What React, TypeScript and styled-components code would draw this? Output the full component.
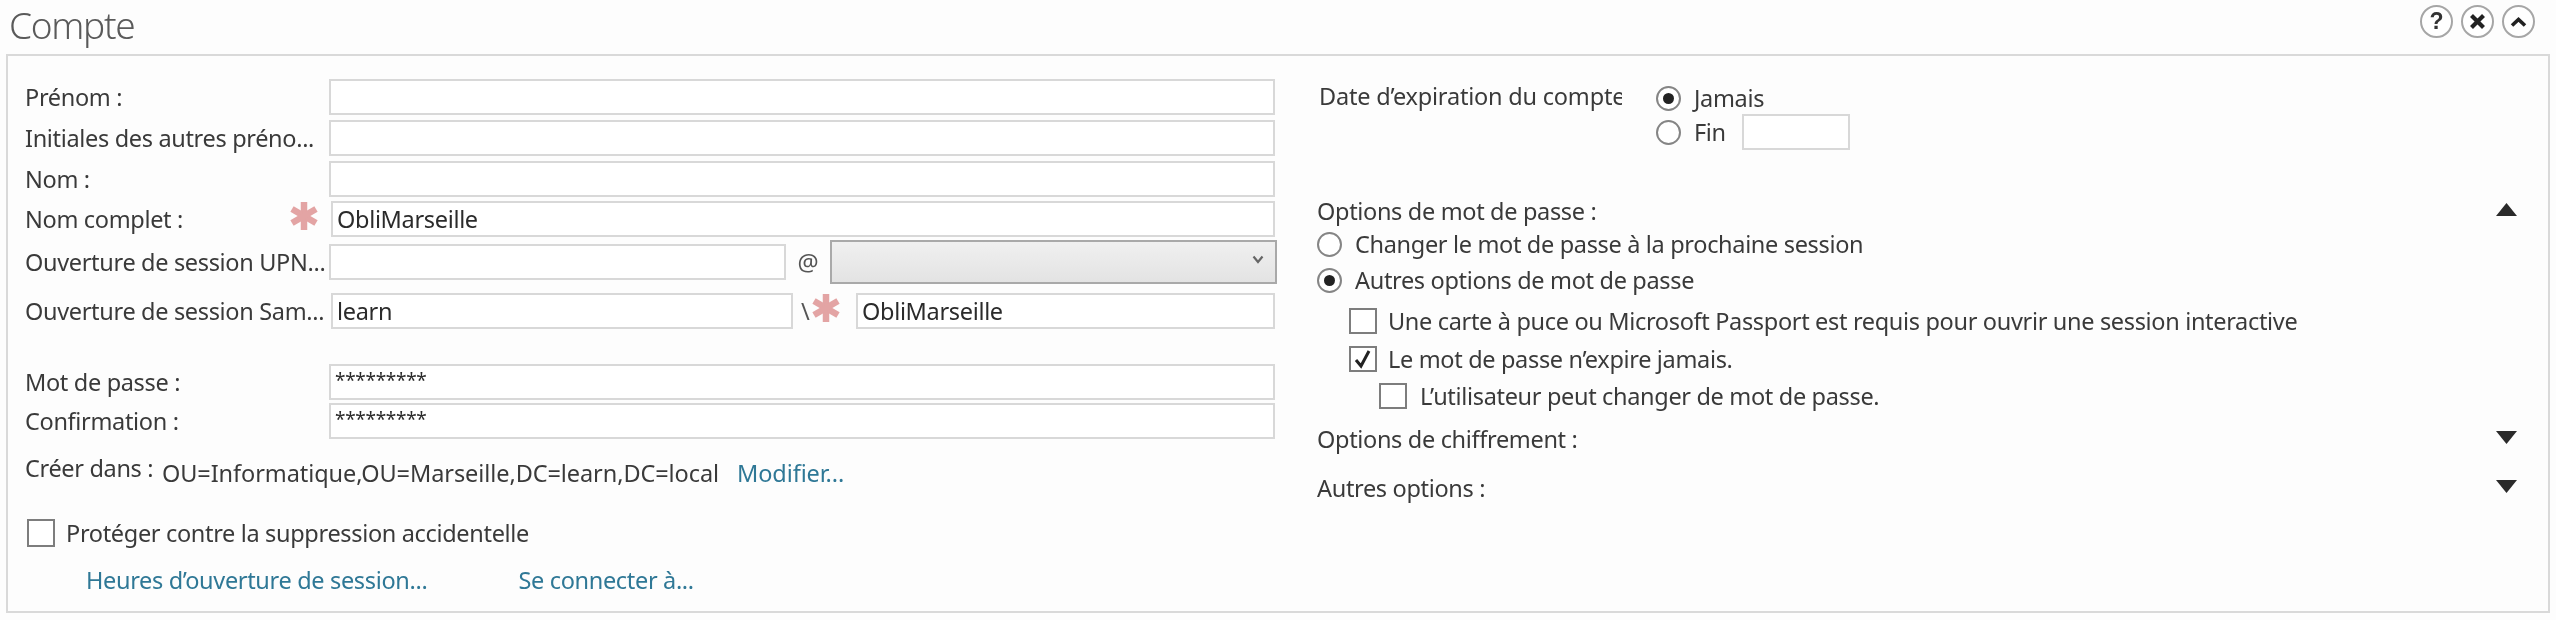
import React from "react";
import styled, { createGlobalStyle } from "styled-components";

const Global = createGlobalStyle`
  html, body { margin: 0; padding: 0; background: #fdfdfd; }
  body { font-family: "Noto Sans", "Open Sans", sans-serif; font-size: 23.5px; line-height: 30px; letter-spacing: -0.33px; color: #3a3a3a; }
`;

const Page = styled.div`
  width: 2556px;
  height: 620px;
  overflow: hidden;
  filter: blur(0.55px);
`;

const Header = styled.header`
  height: 54px;
  display: flex;
  align-items: flex-start;
  justify-content: space-between;
  padding: 0 21px 0 9px;
  box-sizing: border-box;
`;

const Title = styled.h1`
  margin: 0;
  font-weight: 300;
  font-size: 37px;
  line-height: 50px;
  letter-spacing: -1.3px;
  color: #5a5a5a;
`;

const HeaderIcons = styled.div`
  display: flex;
  gap: 8px;
  margin-top: 5px;
`;

const RoundIcon = styled.span`
  width: 33px;
  height: 33px;
  box-sizing: border-box;
  border: 2px solid #a6a6a6;
  border-radius: 50%;
  background: #fff;
  display: flex;
  align-items: center;
  justify-content: center;
  font: 700 23px "Liberation Sans", sans-serif;
  letter-spacing: 0;
  color: #333;
`;

const Panel = styled.main`
  margin: 0 6px;
  height: 559px;
  box-sizing: border-box;
  border: 2px solid #d9d9d9;
  background: #fdfdfd;
  display: flex;
  gap: 42px;
  padding: 0 31px 0 17px;
`;

const LeftColumn = styled.section`
  width: 1250px;
  flex: none;
  padding-top: 23px;
`;

const RightColumn = styled.section`
  flex: 1;
  padding-top: 25px;
`;

const FormRow = styled.div<{ $top?: number }>`
  height: 36px;
  display: flex;
  align-items: center;
  margin-top: ${(p) => p.$top ?? 0}px;
`;

const Label = styled.label<{ $width?: number; $end?: number }>`
  width: ${(p) => p.$width ?? 304}px;
  flex: none;
  display: flex;
  align-items: center;
  justify-content: space-between;
  padding-right: ${(p) => p.$end ?? 0}px;
  box-sizing: border-box;
  white-space: nowrap;
`;

const Field = styled.input<{ $width?: number }>`
  ${(p) => (p.$width ? `width: ${p.$width}px; flex: none;` : "flex: 1; min-width: 0;")}
  height: 36px;
  box-sizing: border-box;
  border: 2px solid #d8d8d8;
  background: #fff;
  padding: 0 4px;
  margin: 0;
  outline: none;
  font: inherit;
  letter-spacing: inherit;
  color: #2b2b2b;
`;

const PasswordField = styled(Field)`
  font-size: 19px;
  letter-spacing: -0.3px;
  padding-bottom: 5px;
`;

const Separator = styled.span<{ $width: number }>`
  width: ${(p) => p.$width}px;
  flex: none;
  text-align: center;
  color: #555;
`;

const Select = styled.div`
  width: 447px;
  flex: none;
  height: 44px;
  margin-right: -2px;
  box-sizing: border-box;
  border: 2px solid #a9a9a9;
  background: linear-gradient(#f0f0f0, #e3e3e3);
  display: flex;
  align-items: center;
  justify-content: flex-end;
  padding: 0 11px 6px 0;
`;

const BackslashGroup = styled.span`
  width: 63px;
  flex: none;
  display: flex;
  align-items: center;
  gap: 2px;
  padding-left: 8px;
  box-sizing: border-box;
  color: #555;
`;

const LocationRow = styled.div`
  display: flex;
  align-items: flex-start;
  height: 37px;
  margin-top: 13px;
  line-height: 32px;
  white-space: nowrap;
`;

const LocationLabel = styled.span`
  width: 137px;
  flex: none;
`;

const LocationValue = styled.span`
  padding-top: 5px;
  letter-spacing: -0.08px;
`;

const Link = styled.a`
  color: #2f7896;
  cursor: pointer;
`;

const ModifyLink = styled(Link)`
  margin-left: 18px;
  padding-top: 5px;
  letter-spacing: -0.1px;
`;

const CheckRow = styled.div<{ $top: number; $indent?: number; $gap?: number; $height?: number }>`
  display: flex;
  align-items: center;
  height: ${(p) => p.$height ?? 26}px;
  gap: ${(p) => p.$gap ?? 11}px;
  margin-top: ${(p) => p.$top}px;
  padding-left: ${(p) => p.$indent ?? 0}px;
  white-space: nowrap;
`;

const Box = styled.span<{ $tall?: boolean }>`
  width: 28px;
  height: ${(p) => (p.$tall ? 28 : 26)}px;
  flex: none;
  box-sizing: border-box;
  border: 2px solid #7d7d7d;
  background: #fff;
  display: flex;
  align-items: center;
  justify-content: center;
`;

const LinksRow = styled.nav`
  display: flex;
  gap: 91px;
  height: 30px;
  line-height: 30px;
  margin-top: 18px;
  padding-left: 61px;
  white-space: nowrap;
`;

const ExpiryRow = styled.div`
  display: flex;
  align-items: flex-start;
`;

const ExpiryLabel = styled.span`
  width: 303px;
  flex: none;
  margin-left: 2px;
  line-height: 30px;
  letter-spacing: -0.2px;
  overflow: hidden;
  white-space: nowrap;
`;

const ExpiryOptions = styled.div`
  margin-left: 34px;
`;

const RadioRow = styled.div<{ $top?: number }>`
  height: 34px;
  display: flex;
  align-items: center;
  gap: 13px;
  margin-top: ${(p) => p.$top ?? 0}px;
  white-space: nowrap;
`;

const Radio = styled.span<{ $on?: boolean }>`
  width: 25px;
  height: 25px;
  flex: none;
  box-sizing: border-box;
  border-radius: 50%;
  border: 2px solid #858585;
  background: #fff;
  display: flex;
  align-items: center;
  justify-content: center;
  &::after {
    content: "";
    width: 11px;
    height: 11px;
    border-radius: 50%;
    background: ${(p) => (p.$on ? "#222" : "transparent")};
  }
`;

const EndField = styled(Field)`
  margin-left: 3px;
`;

const SectionHead = styled.div<{ $top: number }>`
  height: 30px;
  display: flex;
  align-items: center;
  justify-content: space-between;
  padding-bottom: 2px;
  box-sizing: border-box;
  margin-top: ${(p) => p.$top}px;
  white-space: nowrap;
`;

const Triangle = styled.svg`
  margin: 0 0 4px;
  flex: none;
`;

const StarIcon = styled.svg`
  flex: none;
  margin-top: -6px;
`;

const Star = () => (
  <StarIcon width="30" height="30" viewBox="0 0 30 30">
    <g stroke="#e3a4a4" strokeWidth="6.5">
      <line x1="15" y1="1" x2="15" y2="29" />
      <line x1="3" y1="8" x2="27" y2="22" />
      <line x1="27" y1="8" x2="3" y2="22" />
    </g>
  </StarIcon>
);

const Tri = ({ up }: { up?: boolean }) => (
  <Triangle width="21" height="13" viewBox="0 0 21 13">
    <path d={up ? "M10.5 0 L21 13 L0 13 Z" : "M0 0 L21 0 L10.5 13 Z"} fill="#2a2a2a" />
  </Triangle>
);

export default function App() {
  return (
    <Page>
      <Global />
      <Header>
        <Title>Compte</Title>
        <HeaderIcons>
          <RoundIcon>?</RoundIcon>
          <RoundIcon>
            <svg width="17" height="17" viewBox="0 0 17 17">
              <path d="M2.5 2.5 L14.5 14.5 M14.5 2.5 L2.5 14.5" stroke="#222" strokeWidth="4.2" />
            </svg>
          </RoundIcon>
          <RoundIcon>
            <svg width="17" height="11" viewBox="0 0 17 11">
              <path d="M2 9.5 L8.5 3.5 L15 9.5" fill="none" stroke="#222" strokeWidth="3.6" />
            </svg>
          </RoundIcon>
        </HeaderIcons>
      </Header>
      <Panel>
        <LeftColumn>
          <FormRow>
            <Label>Prénom :</Label>
            <Field readOnly />
          </FormRow>
          <FormRow $top={5}>
            <Label>Initiales des autres préno...</Label>
            <Field readOnly />
          </FormRow>
          <FormRow $top={5}>
            <Label>Nom :</Label>
            <Field readOnly />
          </FormRow>
          <FormRow $top={4}>
            <Label $width={306} $end={12}>
              Nom complet :
              <Star />
            </Label>
            <Field readOnly defaultValue="ObliMarseille" />
          </FormRow>
          <FormRow $top={7}>
            <Label>Ouverture de session UPN...</Label>
            <Field readOnly $width={457} />
            <Separator $width={44}>@</Separator>
            <Select>
              <svg width="12" height="9" viewBox="0 0 12 9">
                <path d="M1.5 1.5 L6 7 L10.5 1.5" fill="none" stroke="#666" strokeWidth="2.2" />
              </svg>
            </Select>
          </FormRow>
          <FormRow $top={13}>
            <Label $width={306}>Ouverture de session Sam...</Label>
            <Field readOnly $width={462} defaultValue="learn" />
            <BackslashGroup>
              \
              <Star />
            </BackslashGroup>
            <Field readOnly defaultValue="ObliMarseille" />
          </FormRow>
          <FormRow $top={35}>
            <Label>Mot de passe :</Label>
            <PasswordField readOnly defaultValue="*********" />
          </FormRow>
          <FormRow $top={3}>
            <Label>Confirmation :</Label>
            <PasswordField readOnly defaultValue="*********" />
          </FormRow>
          <LocationRow>
            <LocationLabel>Créer dans :</LocationLabel>
            <LocationValue>OU=Informatique,OU=Marseille,DC=learn,DC=local</LocationValue>
            <ModifyLink>Modifier...</ModifyLink>
          </LocationRow>
          <CheckRow $top={30} $indent={2} $height={28}>
            <Box $tall />
            Protéger contre la suppression accidentelle
          </CheckRow>
          <LinksRow>
            <Link>Heures d’ouverture de session...</Link>
            <Link>Se connecter à...</Link>
          </LinksRow>
        </LeftColumn>
        <RightColumn>
          <ExpiryRow>
            <ExpiryLabel>Date d’expiration du compte</ExpiryLabel>
            <ExpiryOptions>
              <RadioRow>
                <Radio $on />
                Jamais
              </RadioRow>
              <RadioRow>
                <Radio />
                Fin
                <EndField readOnly $width={108} />
              </RadioRow>
            </ExpiryOptions>
          </ExpiryRow>
          <SectionHead $top={48}>
            Options de mot de passe :
            <Tri up />
          </SectionHead>
          <RadioRow>
            <Radio />
            Changer le mot de passe à la prochaine session
          </RadioRow>
          <RadioRow $top={2}>
            <Radio $on />
            Autres options de mot de passe
          </RadioRow>
          <CheckRow $top={11} $indent={32}>
            <Box />
            Une carte à puce ou Microsoft Passport est requis pour ouvrir une session interactive
          </CheckRow>
          <CheckRow $top={12} $indent={32}>
            <Box>
              <svg width="20" height="20" viewBox="0 0 20 20">
                <path d="M3 11 L8 17 L16 2" fill="none" stroke="#222" strokeWidth="3" />
              </svg>
            </Box>
            Le mot de passe n’expire jamais.
          </CheckRow>
          <CheckRow $top={11} $indent={62} $gap={13}>
            <Box />
            L’utilisateur peut changer de mot de passe.
          </CheckRow>
          <SectionHead $top={16}>
            Options de chiffrement :
            <Tri />
          </SectionHead>
          <SectionHead $top={19}>
            Autres options :
            <Tri />
          </SectionHead>
        </RightColumn>
      </Panel>
    </Page>
  );
}
